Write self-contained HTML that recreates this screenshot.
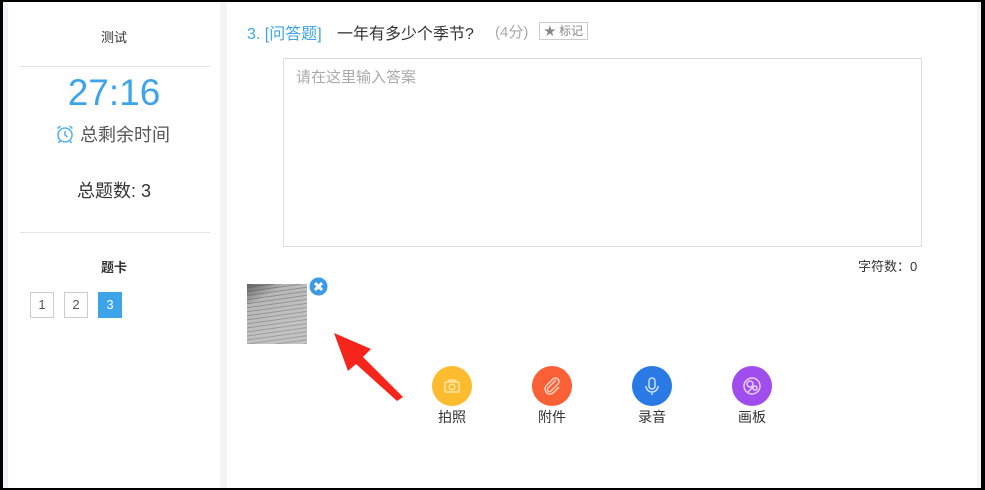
<!DOCTYPE html><html><head><meta charset="utf-8"><style>
body{margin:0;width:985px;height:490px;background:#000;position:relative;overflow:hidden;font-family:"Liberation Sans","Noto Sans CJK SC",sans-serif;}
#in{position:absolute;left:3px;top:2px;width:978px;height:486px;background:#f3f3f7;}
.l{position:absolute;left:5px;top:0;width:212px;height:486px;background:#fff;}
.m{position:absolute;left:224px;top:0;width:750px;height:486px;background:#fff;}
.a{position:absolute;white-space:nowrap;}
.hr{position:absolute;left:12px;width:190px;height:1px;background:#e3e3e3;}
.box{position:absolute;top:290px;width:24px;height:26px;border:1px solid #ccc;box-sizing:border-box;font-size:13px;color:#555;text-align:center;line-height:24px;}
.c{position:absolute;width:40px;height:40px;border-radius:50%;top:364px;}
.lb{position:absolute;top:405px;font-size:14px;color:#333;}
</style></head><body><div id="in">
<div class="l">
<div class="a" style="left:0;width:212px;text-align:center;top:25px;font-size:13px;color:#333">测试</div>
<div class="hr" style="top:64px"></div>
<div class="a" style="left:0;width:212px;text-align:center;top:70px;font-size:37px;color:#3da4ea">27:16</div>
<div class="a" style="left:47px;top:119px;font-size:18px;color:#555">
<svg width="20" height="20" viewBox="0 0 20 20" style="vertical-align:-3px"><circle cx="10" cy="11" r="7" fill="none" stroke="#5ab2ec" stroke-width="1.6"/><path d="M10 7v4l2.5 2M2.5 4.5l3-2.5M17.5 4.5l-3-2.5M5 17l-1.5 2M15 17l1.5 2" stroke="#5ab2ec" stroke-width="1.6" fill="none"/></svg> 总剩余时间</div>
<div class="a" style="left:0;width:212px;text-align:center;top:175px;font-size:18px;color:#333">总题数: 3</div>
<div class="hr" style="top:230px"></div>
<div class="a" style="left:0;width:212px;text-align:center;top:255px;font-size:13px;color:#333;font-weight:bold">题卡</div>
<div class="box" style="left:22px">1</div>
<div class="box" style="left:56px">2</div>
<div class="box" style="left:90px;background:#3da4ea;border-color:#3da4ea;color:#fff">3</div>
</div>
<div class="m">
<div class="a" style="left:20px;top:18px;font-size:16px;color:#3da4ea">3. [问答题]</div>
<div class="a" style="left:110px;top:18px;font-size:16px;color:#333">一年有多少个季节?</div>
<div class="a" style="left:268px;top:19px;font-size:15px;color:#aaa">(4分)</div>
<div class="a" style="left:312px;top:20px;height:18px;width:49px;border:1px solid #ccc;box-sizing:border-box;font-size:12px;color:#888;line-height:16px;text-align:center">★ 标记</div>
<div class="a" style="left:56px;top:56px;width:639px;height:189px;border:1px solid #ddd;box-sizing:border-box"></div>
<div class="a" style="left:69px;top:64px;font-size:15px;color:#aaa">请在这里输入答案</div>
<div class="a" style="left:631px;top:254px;font-size:13px;color:#333">字符数：0</div>
<div class="a" style="left:20px;top:282px;width:60px;height:60px;background:repeating-linear-gradient(172deg,#b8b8b8 0 3px,#8f8f8f 3px 4px),#aaa"></div>
<div class="a" style="left:20px;top:282px;width:60px;height:60px;background:linear-gradient(150deg,rgba(60,60,60,.7) 0%,rgba(255,255,255,0) 25%,rgba(255,255,255,.15) 70%)"></div>
<svg class="a" style="left:82px;top:275px" width="19" height="19" viewBox="0 0 19 19"><circle cx="9.5" cy="9.5" r="9" fill="#3d9be6"/><path d="M6 6l7 7M13 6l-7 7" stroke="#fff" stroke-width="3"/></svg>
<svg class="a" style="left:100px;top:325px" width="80" height="80"><polygon points="7,6 21,44 29,37 70,74 76,70 36,30 44,22" fill="#f5251c"/></svg>
<div class="c" style="left:205px;background:#fdbb2f"></div>
<div class="c" style="left:305px;background:#fa6035"></div>
<div class="c" style="left:405px;background:#2a7ae6"></div>
<div class="c" style="left:505px;background:#a04ded"></div>
<svg class="a" style="left:205px;top:364px" width="40" height="40"><rect x="13" y="16" width="14" height="10" rx="1" fill="none" stroke="#ffe6a8" stroke-width="1.5"/><circle cx="20" cy="21" r="2.8" fill="none" stroke="#ffe6a8" stroke-width="1.5"/><path d="M16 16l1.5-2h5l1.5 2" fill="none" stroke="#ffe6a8" stroke-width="1.5"/></svg>
<svg class="a" style="left:305px;top:364px" width="40" height="40"><path d="M24 14l-8 8a2 2 0 0 0 3 3l7-7a3.5 3.5 0 0 0-5-5l-7 7a5 5 0 0 0 7 7l6-6" fill="none" stroke="#ffd0c0" stroke-width="1.5"/></svg>
<svg class="a" style="left:405px;top:364px" width="40" height="40"><rect x="17" y="12" width="6" height="11" rx="3" fill="none" stroke="#cfe0ff" stroke-width="1.5"/><path d="M14 20a6 6 0 0 0 12 0M20 26v3" fill="none" stroke="#cfe0ff" stroke-width="1.5"/></svg>
<svg class="a" style="left:505px;top:364px" width="40" height="40"><circle cx="20" cy="20" r="8" fill="none" stroke="#e8cfff" stroke-width="1.5"/><circle cx="18" cy="18" r="3" fill="none" stroke="#e8cfff" stroke-width="1.5"/><circle cx="23" cy="22" r="2" fill="none" stroke="#e8cfff" stroke-width="1.5"/><path d="M16 26l5-5" stroke="#e8cfff" stroke-width="1.5"/></svg>
<div class="lb" style="left:211px">拍照</div>
<div class="lb" style="left:311px">附件</div>
<div class="lb" style="left:411px">录音</div>
<div class="lb" style="left:511px">画板</div>
</div>
</div></body></html>
